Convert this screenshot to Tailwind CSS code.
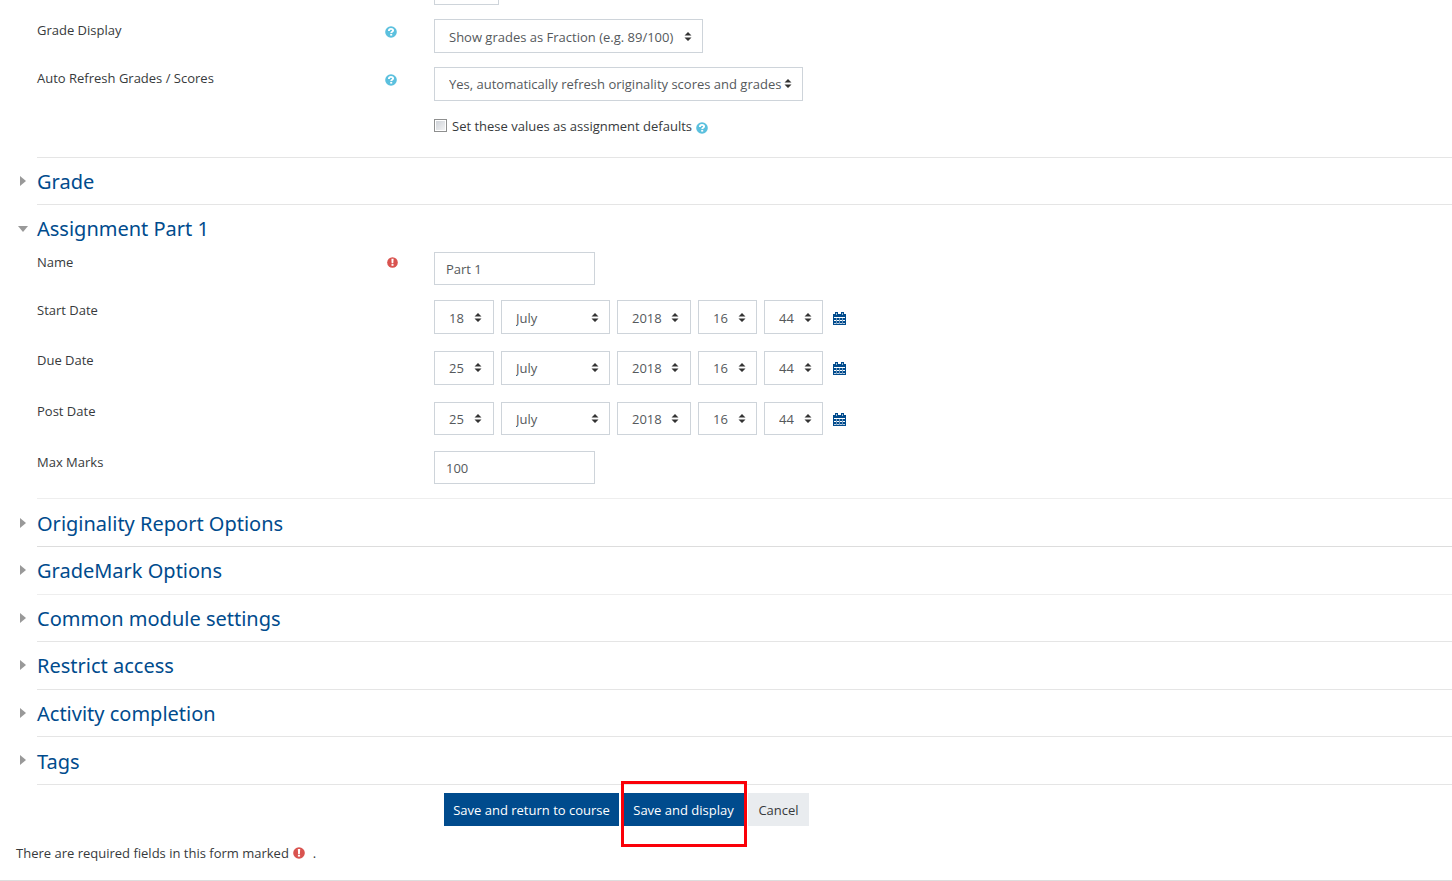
<!DOCTYPE html>
<html lang="en">
<head>
<meta charset="utf-8">
<meta name="viewport" content="width=device-width, initial-scale=1">
<title>Assignment settings</title>
<script src="https://cdn.jsdelivr.net/npm/@tailwindcss/browser@4"></script>
</head>
<body class="bg-white font-['Open_Sans','Noto_Sans',sans-serif] text-[13px] text-[#373a3c]">
<svg class="hidden" aria-hidden="true">
  <symbol id="help" viewBox="0 0 12 12"><circle cx="6" cy="6" r="5.800" fill="#5bc0de"/><path d="M3.900 4.900C3.900 3.500 4.800 2.900 6 2.900c1.200 0 2.100.6 2.100 1.600 0 1.300-1.900 1.200-1.900 2.500" fill="none" stroke="#fff" stroke-width="1.900"/><rect x="5.200" y="7.900" width="2" height="1.700" fill="#fff"/></symbol>
  <symbol id="req" viewBox="0 0 12 12"><circle cx="6" cy="6" r="5.800" fill="#d9534f"/><path d="M4.800 2h2.400l-.3 4.900H5.100z" fill="#fff"/><rect x="4.900" y="7.700" width="2.200" height="1.900" fill="#fff"/></symbol>
  <symbol id="sort" viewBox="0 0 8 9"><path d="M4 0 7.500 3.600H.5zM4 9 .5 5.400h7z" fill="#333"/></symbol>
  <symbol id="cal" viewBox="0 0 13 13"><path d="M0 2h13v11H0z" fill="#004b8d"/><path d="M2 0h3v3H2zM8 0h3v3H8z" fill="#004b8d"/><path d="M3 1h1v2H3zM9 1h1v2H9z" fill="#9db9d3"/><path d="M1 5h11v1H1zM1 8h11v1H1z" fill="#fff"/><path d="M1 11h11v1H1z" fill="#b9cde0"/><path d="M3 6h1v6H3zM6 6h1v6H6zM9 6h1v6H9z" fill="#6f98be"/></symbol>
  <symbol id="right" viewBox="0 0 6 10"><path d="M0 0 6 5 0 10z" fill="#999"/></symbol>
  <symbol id="down" viewBox="0 0 10 6"><path d="M0 0h10L5 6z" fill="#999"/></symbol>
</svg>
<form>
  <main class="pl-4">
    <section class="pl-[21px]">
      <div class="grid grid-cols-[397px_1fr]">
        <div class="col-start-2 flex h-[5px] items-end overflow-hidden"><select aria-label="Previous setting" class="h-[34px] w-[65px] shrink-0 appearance-none border border-[#ced4da] bg-white"><option></option></select></div>
      </div>
      <div class="mt-[14px] grid grid-cols-[397px_1fr]">
        <div class="flex justify-between pr-[37px] leading-[22px]"><label for="gd">Grade Display</label><svg class="mt-[7px] size-3"><use href="#help"/></svg></div>
        <div class="flex"><span class="relative flex"><select id="gd" class="h-[34px] w-[269px] appearance-none border border-[#ced4da] bg-white pt-[3px] pl-[14px] text-[#55595c]"><option>Show grades as Fraction (e.g. 89/100)</option></select><svg class="pointer-events-none absolute top-[13px] right-[11px] h-[9px] w-2"><use href="#sort"/></svg></span></div>
      </div>
      <div class="mt-[14px] grid grid-cols-[397px_1fr]">
        <div class="flex justify-between pr-[37px] leading-[22px]"><label for="ar">Auto Refresh Grades / Scores</label><svg class="mt-[7px] size-3"><use href="#help"/></svg></div>
        <div class="flex"><span class="relative flex"><select id="ar" class="h-[34px] w-[369px] appearance-none border border-[#ced4da] bg-white pt-[2px] pl-[14px] text-[#55595c]"><option>Yes, automatically refresh originality scores and grades</option></select><svg class="pointer-events-none absolute top-[12px] right-[11px] h-[9px] w-2"><use href="#sort"/></svg></span></div>
      </div>
      <div class="mt-[14px] grid h-[42px] grid-cols-[397px_1fr]">
        <div class="col-start-2 flex items-start leading-[22px]"><input id="df" type="checkbox" class="mt-1 size-[13px] appearance-none border border-[#8e8f8f] bg-linear-to-br from-[#cbcfd5] to-[#f6f6f6] ring-1 ring-white ring-inset"><label for="df" class="ml-[5px]">Set these values as assignment defaults</label><svg class="mt-[7px] ml-1 size-3"><use href="#help"/></svg></div>
      </div>
    </section>

    <section class="grid grid-cols-[21px_1fr]">
      <svg class="mt-[19px] ml-1 h-[10px] w-[6px]"><use href="#right"/></svg>
      <h3 class="h-[47px] border-t border-[#e5e5e5] pt-2 font-['Noto_Sans',sans-serif] text-xl leading-8"><a href="#" class="text-[#004b8d]">Grade</a></h3>
    </section>

    <section class="grid grid-cols-[21px_1fr]">
      <svg class="mt-[22px] ml-[2px] h-[6px] w-[10px]"><use href="#down"/></svg>
      <div class="h-[294px] border-t border-[#e5e5e5]">
        <h3 class="h-[47px] pt-2 font-['Noto_Sans',sans-serif] text-xl leading-8"><a href="#" class="text-[#004b8d]">Assignment Part 1</a></h3>
        <div class="grid grid-cols-[397px_1fr]">
          <div class="flex justify-between pr-9 leading-5"><label for="nm">Name</label><svg class="mt-[5px] size-[11px]"><use href="#req"/></svg></div>
          <div class="flex"><input id="nm" type="text" value="Part 1" class="h-[33px] w-[161px] border border-[#ced4da] pl-[11px] text-[#55595c]"></div>
        </div>
        <div class="mt-[15px] grid grid-cols-[397px_1fr]">
          <div class="leading-5"><label for="s1">Start Date</label></div>
          <div class="flex items-center gap-[7px]">
            <span class="relative flex"><select id="s1" class="h-[34px] w-[60px] appearance-none border border-[#ced4da] bg-white pt-[3px] pl-[14px] text-[#55595c]"><option>18</option></select><svg class="pointer-events-none absolute top-[13px] right-3 h-[9px] w-2"><use href="#sort"/></svg></span>
            <span class="relative flex"><select aria-label="Start month" class="h-[34px] w-[109px] appearance-none border border-[#ced4da] bg-white pt-[3px] pl-[14px] text-[#55595c]"><option>July</option></select><svg class="pointer-events-none absolute top-[13px] right-[11px] h-[9px] w-2"><use href="#sort"/></svg></span>
            <span class="relative flex"><select aria-label="Start year" class="h-[34px] w-[74px] appearance-none border border-[#ced4da] bg-white pt-[3px] pl-[14px] text-[#55595c]"><option>2018</option></select><svg class="pointer-events-none absolute top-[13px] right-3 h-[9px] w-2"><use href="#sort"/></svg></span>
            <span class="relative flex"><select aria-label="Start hour" class="h-[34px] w-[59px] appearance-none border border-[#ced4da] bg-white pt-[3px] pl-[14px] text-[#55595c]"><option>16</option></select><svg class="pointer-events-none absolute top-[13px] right-[11px] h-[9px] w-2"><use href="#sort"/></svg></span>
            <span class="relative flex"><select aria-label="Start minute" class="h-[34px] w-[59px] appearance-none border border-[#ced4da] bg-white pt-[3px] pl-[14px] text-[#55595c]"><option>44</option></select><svg class="pointer-events-none absolute top-[13px] right-[11px] h-[9px] w-2"><use href="#sort"/></svg></span>
            <a href="#" aria-label="Start date calendar" class="ml-[3px] pt-[2px]"><svg class="size-[13px]"><use href="#cal"/></svg></a>
          </div>
        </div>
        <div class="mt-[17px] grid grid-cols-[397px_1fr]">
          <div class="leading-[18px]"><label for="d1">Due Date</label></div>
          <div class="flex items-center gap-[7px]">
            <span class="relative flex"><select id="d1" class="h-[34px] w-[60px] appearance-none border border-[#ced4da] bg-white pt-[2px] pl-[14px] text-[#55595c]"><option>25</option></select><svg class="pointer-events-none absolute top-[12px] right-3 h-[9px] w-2"><use href="#sort"/></svg></span>
            <span class="relative flex"><select aria-label="Due month" class="h-[34px] w-[109px] appearance-none border border-[#ced4da] bg-white pt-[2px] pl-[14px] text-[#55595c]"><option>July</option></select><svg class="pointer-events-none absolute top-[12px] right-[11px] h-[9px] w-2"><use href="#sort"/></svg></span>
            <span class="relative flex"><select aria-label="Due year" class="h-[34px] w-[74px] appearance-none border border-[#ced4da] bg-white pt-[2px] pl-[14px] text-[#55595c]"><option>2018</option></select><svg class="pointer-events-none absolute top-[12px] right-3 h-[9px] w-2"><use href="#sort"/></svg></span>
            <span class="relative flex"><select aria-label="Due hour" class="h-[34px] w-[59px] appearance-none border border-[#ced4da] bg-white pt-[2px] pl-[14px] text-[#55595c]"><option>16</option></select><svg class="pointer-events-none absolute top-[12px] right-[11px] h-[9px] w-2"><use href="#sort"/></svg></span>
            <span class="relative flex"><select aria-label="Due minute" class="h-[34px] w-[59px] appearance-none border border-[#ced4da] bg-white pt-[2px] pl-[14px] text-[#55595c]"><option>44</option></select><svg class="pointer-events-none absolute top-[12px] right-[11px] h-[9px] w-2"><use href="#sort"/></svg></span>
            <a href="#" aria-label="Due date calendar" class="ml-[3px]"><svg class="size-[13px]"><use href="#cal"/></svg></a>
          </div>
        </div>
        <div class="mt-[17px] grid grid-cols-[397px_1fr]">
          <div class="leading-[18px]"><label for="p1">Post Date</label></div>
          <div class="flex items-center gap-[7px]">
            <span class="relative flex"><select id="p1" class="h-[33px] w-[60px] appearance-none border border-[#ced4da] bg-white pt-[2px] pl-[14px] text-[#55595c]"><option>25</option></select><svg class="pointer-events-none absolute top-[12px] right-3 h-[9px] w-2"><use href="#sort"/></svg></span>
            <span class="relative flex"><select aria-label="Post month" class="h-[33px] w-[109px] appearance-none border border-[#ced4da] bg-white pt-[2px] pl-[14px] text-[#55595c]"><option>July</option></select><svg class="pointer-events-none absolute top-[12px] right-[11px] h-[9px] w-2"><use href="#sort"/></svg></span>
            <span class="relative flex"><select aria-label="Post year" class="h-[33px] w-[74px] appearance-none border border-[#ced4da] bg-white pt-[2px] pl-[14px] text-[#55595c]"><option>2018</option></select><svg class="pointer-events-none absolute top-[12px] right-3 h-[9px] w-2"><use href="#sort"/></svg></span>
            <span class="relative flex"><select aria-label="Post hour" class="h-[33px] w-[59px] appearance-none border border-[#ced4da] bg-white pt-[2px] pl-[14px] text-[#55595c]"><option>16</option></select><svg class="pointer-events-none absolute top-[12px] right-[11px] h-[9px] w-2"><use href="#sort"/></svg></span>
            <span class="relative flex"><select aria-label="Post minute" class="h-[33px] w-[59px] appearance-none border border-[#ced4da] bg-white pt-[2px] pl-[14px] text-[#55595c]"><option>44</option></select><svg class="pointer-events-none absolute top-[12px] right-[11px] h-[9px] w-2"><use href="#sort"/></svg></span>
            <a href="#" aria-label="Post date calendar" class="ml-[3px] pt-[2px]"><svg class="size-[13px]"><use href="#cal"/></svg></a>
          </div>
        </div>
        <div class="mt-4 grid grid-cols-[397px_1fr]">
          <div class="leading-[22px]"><label for="mm">Max Marks</label></div>
          <div class="flex"><input id="mm" type="text" value="100" class="h-[33px] w-[161px] border border-[#ced4da] pl-[11px] text-[#55595c]"></div>
        </div>
      </div>
    </section>

    <section class="grid grid-cols-[21px_1fr]">
      <svg class="mt-5 ml-1 h-[10px] w-[6px]"><use href="#right"/></svg>
      <h3 class="h-12 border-t border-[#eee] pt-[9px] font-['Noto_Sans',sans-serif] text-xl leading-8"><a href="#" class="text-[#004b8d]">Originality Report Options</a></h3>
    </section>
    <section class="grid grid-cols-[21px_1fr]">
      <svg class="mt-[19px] ml-1 h-[10px] w-[6px]"><use href="#right"/></svg>
      <h3 class="h-12 border-t border-[#ddd] pt-2 font-['Noto_Sans',sans-serif] text-xl leading-8"><a href="#" class="text-[#004b8d]">GradeMark Options</a></h3>
    </section>
    <section class="grid grid-cols-[21px_1fr]">
      <svg class="mt-[19px] ml-1 h-[10px] w-[6px]"><use href="#right"/></svg>
      <h3 class="h-[47px] border-t border-[#eee] pt-2 font-['Noto_Sans',sans-serif] text-xl leading-8"><a href="#" class="text-[#004b8d]">Common module settings</a></h3>
    </section>
    <section class="grid grid-cols-[21px_1fr]">
      <svg class="mt-[19px] ml-1 h-[10px] w-[6px]"><use href="#right"/></svg>
      <h3 class="h-12 border-t border-[#e5e5e5] pt-2 font-['Noto_Sans',sans-serif] text-xl leading-8"><a href="#" class="text-[#004b8d]">Restrict access</a></h3>
    </section>
    <section class="grid grid-cols-[21px_1fr]">
      <svg class="mt-[19px] ml-1 h-[10px] w-[6px]"><use href="#right"/></svg>
      <h3 class="h-[47px] border-t border-[#e5e5e5] pt-2 font-['Noto_Sans',sans-serif] text-xl leading-8"><a href="#" class="text-[#004b8d]">Activity completion</a></h3>
    </section>
    <section class="grid grid-cols-[21px_1fr]">
      <svg class="mt-[19px] ml-1 h-[10px] w-[6px]"><use href="#right"/></svg>
      <h3 class="h-12 border-t border-[#e5e5e5] pt-[9px] font-['Noto_Sans',sans-serif] text-xl leading-8"><a href="#" class="text-[#004b8d]">Tags</a></h3>
    </section>

    <div class="ml-[21px] flex gap-[3px] border-t border-[#e5e5e5] pt-2 pl-[407px]">
      <button type="submit" class="h-[33px] w-[175px] bg-[#004b8d] pt-[2px] whitespace-nowrap text-white">Save and return to course</button>
      <span class="relative flex">
        <button type="submit" class="h-[33px] w-[123px] bg-[#004b8d] pt-[2px] whitespace-nowrap text-white">Save and display</button>
        <span class="pointer-events-none absolute -top-3 -right-[2px] -bottom-[21px] -left-px border-3 border-[#fa0008]"></span>
      </span>
      <button type="button" class="h-[33px] w-[61px] bg-[#e9ecef] pt-[2px]">Cancel</button>
    </div>
    <p class="mt-[17px] flex h-[37px] items-start leading-5">There are required fields in this form marked<svg role="img" aria-label="Required field" class="mt-[4px] mr-2 ml-1 size-3"><use href="#req"/></svg>.</p>
  </main>
  <hr class="border-[#ddd]">
</form>
</body>
</html>
